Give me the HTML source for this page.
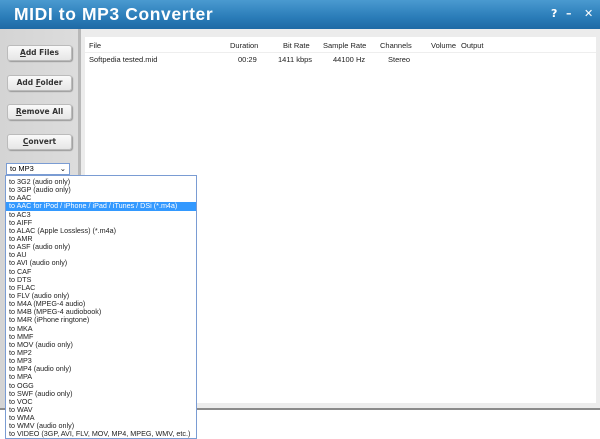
<!DOCTYPE html>
<html><head><style>
*{margin:0;padding:0;box-sizing:border-box}
body{width:600px;height:439px;overflow:hidden;background:#fff;font-family:"Liberation Sans",sans-serif;position:relative}
.t{position:absolute;left:0;top:0;width:600px;height:29px;background:linear-gradient(#4a9ad0,#2a7cb8 60%,#1f6aa5)}
.t h1{position:absolute;left:14px;top:4px;color:#fff;font:bold 17.5px "Liberation Sans",sans-serif;letter-spacing:.6px}
.t .c{position:absolute;top:7px;color:#fff;font:bold 11px "DejaVu Sans",sans-serif}
.lp{position:absolute;left:0;top:29px;width:78px;height:380px;background:linear-gradient(90deg,#d4d4d4,#dcdcdc)}
.dv{position:absolute;left:78px;top:29px;width:3px;height:380px;background:#b8b8b8}
.rp{position:absolute;left:81px;top:29px;width:519px;height:380px;background:#ececec}
.ln{position:absolute;left:0;top:408px;width:600px;height:2px;background:#8a8a8a}
.lst{position:absolute;left:85px;top:37px;width:511px;height:366px;background:#fff}
.btn{position:absolute;left:7px;width:65px;height:16px;background:linear-gradient(#fafafa,#e6e6e6);border:1px solid #bbb;border-radius:3px;box-shadow:1px 1px 1px #999;font:bold 7.5px "DejaVu Sans",sans-serif;color:#333;text-align:center;line-height:14px}
.btn u{text-decoration:underline}
.h{position:absolute;top:4px;font-size:7.5px;color:#222}
.r{position:absolute;top:18px;font-size:7.5px;color:#222}
.sel{position:absolute;left:6px;top:163px;width:64px;height:12px;border:1px solid #7a9cd3;background:#fff;font-size:7.5px;line-height:10px;padding-left:3px}
.dd{position:absolute;left:5px;top:175px;width:192px;height:264px;border:1px solid #7a9cd3;background:#fff;padding-top:2px}
.dd div{height:8.15px;line-height:8.15px;font-size:7.2px;padding-left:3px;color:#222;white-space:nowrap}
.dd .s{background:#3399ff;color:#fff}
</style></head><body>
<div class="t"><h1>MIDI to MP3 Converter</h1><span class="c" style="left:551px">?</span><span class="c" style="left:566px">–</span><span class="c" style="left:584px">✕</span></div>
<div class="lp"></div><div class="dv"></div><div class="rp"></div><div class="ln"></div>
<div class="lst">
<span class="h" style="left:4px">File</span><span class="h" style="left:145px">Duration</span><span class="h" style="left:198px">Bit Rate</span><span class="h" style="left:238px">Sample Rate</span><span class="h" style="left:295px">Channels</span><span class="h" style="left:346px">Volume</span><span class="h" style="left:376px">Output</span>
<div style="position:absolute;left:0;top:15px;width:511px;height:1px;background:#eee"></div>
<span class="r" style="left:4px">Softpedia tested.mid</span><span class="r" style="left:153px">00:29</span><span class="r" style="left:193px">1411 kbps</span><span class="r" style="left:248px">44100 Hz</span><span class="r" style="left:303px">Stereo</span>
</div>
<div class="btn" style="top:45px"><u>A</u>dd Files</div>
<div class="btn" style="top:75px">Add <u>F</u>older</div>
<div class="btn" style="top:104px"><u>R</u>emove All</div>
<div class="btn" style="top:134px"><u>C</u>onvert</div>
<div class="sel">to MP3<span style="position:absolute;right:3px;top:0">⌄</span></div>
<div class="dd">
<div>to 3G2 (audio only)</div><div>to 3GP (audio only)</div><div>to AAC</div><div class="s">to AAC for iPod / iPhone / iPad / iTunes / DSi (*.m4a)</div><div>to AC3</div><div>to AIFF</div><div>to ALAC (Apple Lossless) (*.m4a)</div><div>to AMR</div><div>to ASF (audio only)</div><div>to AU</div><div>to AVI (audio only)</div><div>to CAF</div><div>to DTS</div><div>to FLAC</div><div>to FLV (audio only)</div><div>to M4A (MPEG-4 audio)</div><div>to M4B (MPEG-4 audiobook)</div><div>to M4R (iPhone ringtone)</div><div>to MKA</div><div>to MMF</div><div>to MOV (audio only)</div><div>to MP2</div><div>to MP3</div><div>to MP4 (audio only)</div><div>to MPA</div><div>to OGG</div><div>to SWF (audio only)</div><div>to VOC</div><div>to WAV</div><div>to WMA</div><div>to WMV (audio only)</div><div>to VIDEO (3GP, AVI, FLV, MOV, MP4, MPEG, WMV, etc.)</div>
</div>
</body></html>
